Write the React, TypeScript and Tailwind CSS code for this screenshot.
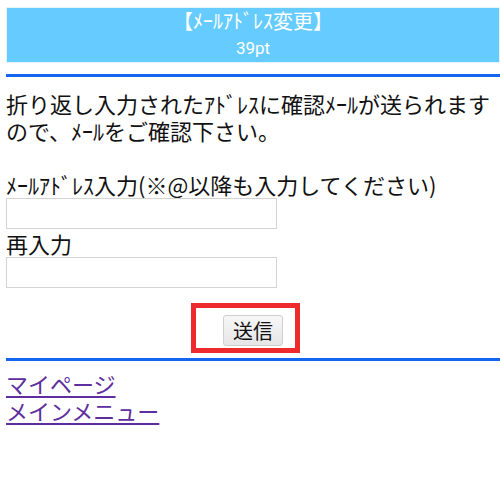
import React from "react";

const jp = { fontFamily: '"Noto Sans CJK JP", "Noto Sans", sans-serif' };

export default function App() {
  return (
    <div className="w-[500px] h-[481px] bg-white overflow-hidden text-[#111]" style={jp}>
      <div className="pl-[6px] pt-[7px]">
        {/* header band */}
        <div className="bg-[#66ccff] border border-[#e3f3fb] h-[56px] flex flex-col items-center text-white">
          <div className="text-[20px] leading-[28px] mt-[-1px]">【ﾒｰﾙｱﾄﾞﾚｽ変更】</div>
          <div className="text-[17px] leading-[24px] mt-[1px]" style={{ fontFamily: "Roboto, sans-serif" }}>39pt</div>
        </div>

        <div className="mt-[11px] h-[3px] bg-[#1466f0]" />

        <div className="mt-[13px] text-[22px] leading-[27px]">
          折り返し入力されたｱﾄﾞﾚｽに確認ﾒｰﾙが送られますので、ﾒｰﾙをご確認下さい。
          <br />
          <br />
          ﾒｰﾙｱﾄﾞﾚｽ入力(※@以降も入力してください)
        </div>
        <input className="block w-[271px] h-[31px] border border-[#d4d4d4] bg-white outline-none" />
        <div className="text-[22px] leading-[27px] mt-[1px]">再入力</div>
        <input className="block w-[271px] h-[31px] border border-[#d4d4d4] bg-white outline-none" />

        <div className="flex justify-center mt-[27px]">
          <div className="relative">
            <button className="block w-[60px] h-[31px] border border-[#cfcfcf] rounded-[3px] bg-gradient-to-b from-[#f7f7f7] to-[#e6e6e6] text-[20px] leading-none text-[#111]">
              送信
            </button>
            <div className="absolute left-[-32px] top-[-12px] w-[109px] h-[50px] border-[5px] border-[#ee2a2e] pointer-events-none" />
          </div>
        </div>

        <div className="mt-[12px] h-[3px] bg-[#1466f0]" />

        <div className="mt-[9px] flex flex-col items-start text-[22px] leading-[27px]">
          <a href="#" className="text-[#5e2d9e] underline underline-offset-[3px]">マイページ</a>
          <a href="#" className="text-[#5e2d9e] underline underline-offset-[3px]">メインメニュー</a>
        </div>
      </div>
    </div>
  );
}
